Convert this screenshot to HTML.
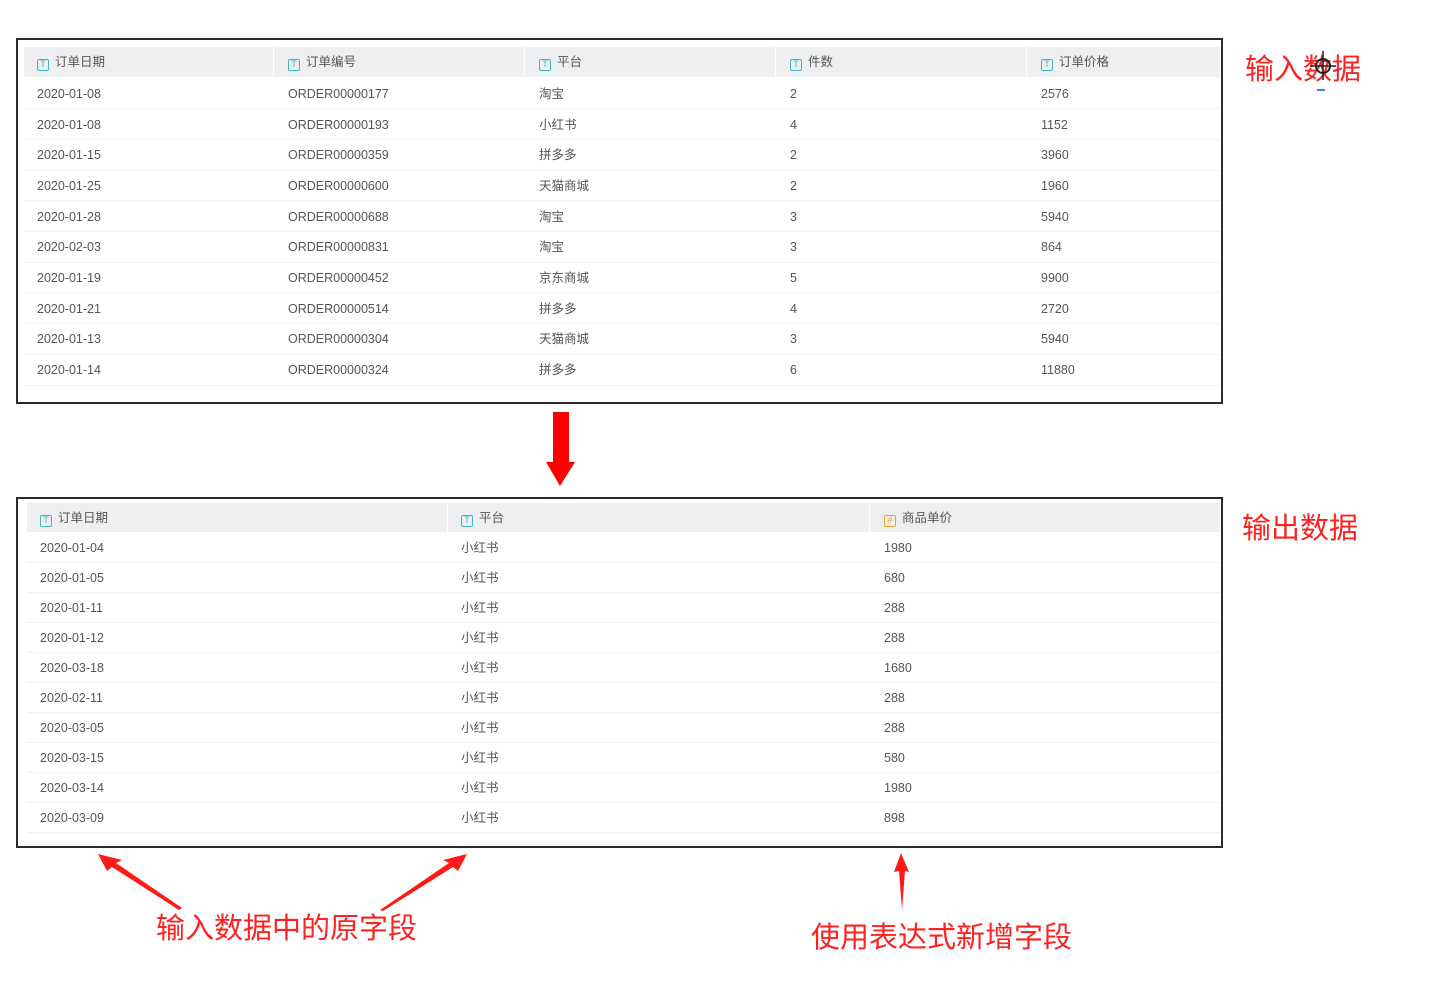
<!DOCTYPE html>
<html><head><meta charset="utf-8">
<style>
body{margin:0;width:1440px;height:983px;background:#fff;position:relative;overflow:hidden;font-family:"Liberation Sans","Noto Sans CJK SC",sans-serif;}
.box{position:absolute;border:2px solid #2b2b2b;box-sizing:border-box;background:#fff}
.hdr{position:absolute;background:#eeeff1}
.t{position:absolute;font-size:12.5px;color:#555;white-space:nowrap;line-height:16px}
.h{color:#555}
.ic{display:inline-block;box-sizing:border-box;width:12px;height:12px;border:1.5px solid #3fb6c2;border-radius:2px;font-size:9px;line-height:9px;text-align:center;color:#3fb6c2;margin-right:6px;vertical-align:-1px;font-weight:normal}
.ic.o{border-color:#f0a030;color:#f0a030}
.line{position:absolute;height:1px;background:#eff0f2}
.lbl{position:absolute;color:#ff2020;font-size:29px;white-space:nowrap;line-height:34px}
</style></head><body>

<div class="box" style="left:16px;top:38px;width:1207px;height:366px"></div>
<div class="hdr" style="left:24px;top:47px;width:1196px;height:30px"></div>
<div style="position:absolute;left:273px;top:47px;width:1px;height:30px;background:#fff"></div>
<div style="position:absolute;left:524px;top:47px;width:1px;height:30px;background:#fff"></div>
<div style="position:absolute;left:775px;top:47px;width:1px;height:30px;background:#fff"></div>
<div style="position:absolute;left:1026px;top:47px;width:1px;height:30px;background:#fff"></div>
<div class="t h" style="left:37px;top:54px"><span class="ic">T</span>订单日期</div>
<div class="t h" style="left:288px;top:54px"><span class="ic">T</span>订单编号</div>
<div class="t h" style="left:539px;top:54px"><span class="ic">T</span>平台</div>
<div class="t h" style="left:790px;top:54px"><span class="ic">T</span>件数</div>
<div class="t h" style="left:1041px;top:54px"><span class="ic">T</span>订单价格</div>

<div class="t" style="left:37px;top:86px">2020-01-08</div><div class="t" style="left:288px;top:86px">ORDER00000177</div><div class="t" style="left:539px;top:86px">淘宝</div><div class="t" style="left:790px;top:86px">2</div><div class="t" style="left:1041px;top:86px">2576</div><div class="line" style="left:24px;top:108px;width:1196px"></div>
<div class="t" style="left:37px;top:117px">2020-01-08</div><div class="t" style="left:288px;top:117px">ORDER00000193</div><div class="t" style="left:539px;top:117px">小红书</div><div class="t" style="left:790px;top:117px">4</div><div class="t" style="left:1041px;top:117px">1152</div><div class="line" style="left:24px;top:139px;width:1196px"></div>
<div class="t" style="left:37px;top:147px">2020-01-15</div><div class="t" style="left:288px;top:147px">ORDER00000359</div><div class="t" style="left:539px;top:147px">拼多多</div><div class="t" style="left:790px;top:147px">2</div><div class="t" style="left:1041px;top:147px">3960</div><div class="line" style="left:24px;top:170px;width:1196px"></div>
<div class="t" style="left:37px;top:178px">2020-01-25</div><div class="t" style="left:288px;top:178px">ORDER00000600</div><div class="t" style="left:539px;top:178px">天猫商城</div><div class="t" style="left:790px;top:178px">2</div><div class="t" style="left:1041px;top:178px">1960</div><div class="line" style="left:24px;top:200px;width:1196px"></div>
<div class="t" style="left:37px;top:209px">2020-01-28</div><div class="t" style="left:288px;top:209px">ORDER00000688</div><div class="t" style="left:539px;top:209px">淘宝</div><div class="t" style="left:790px;top:209px">3</div><div class="t" style="left:1041px;top:209px">5940</div><div class="line" style="left:24px;top:231px;width:1196px"></div>
<div class="t" style="left:37px;top:239px">2020-02-03</div><div class="t" style="left:288px;top:239px">ORDER00000831</div><div class="t" style="left:539px;top:239px">淘宝</div><div class="t" style="left:790px;top:239px">3</div><div class="t" style="left:1041px;top:239px">864</div><div class="line" style="left:24px;top:262px;width:1196px"></div>
<div class="t" style="left:37px;top:270px">2020-01-19</div><div class="t" style="left:288px;top:270px">ORDER00000452</div><div class="t" style="left:539px;top:270px">京东商城</div><div class="t" style="left:790px;top:270px">5</div><div class="t" style="left:1041px;top:270px">9900</div><div class="line" style="left:24px;top:292px;width:1196px"></div>
<div class="t" style="left:37px;top:301px">2020-01-21</div><div class="t" style="left:288px;top:301px">ORDER00000514</div><div class="t" style="left:539px;top:301px">拼多多</div><div class="t" style="left:790px;top:301px">4</div><div class="t" style="left:1041px;top:301px">2720</div><div class="line" style="left:24px;top:323px;width:1196px"></div>
<div class="t" style="left:37px;top:331px">2020-01-13</div><div class="t" style="left:288px;top:331px">ORDER00000304</div><div class="t" style="left:539px;top:331px">天猫商城</div><div class="t" style="left:790px;top:331px">3</div><div class="t" style="left:1041px;top:331px">5940</div><div class="line" style="left:24px;top:354px;width:1196px"></div>
<div class="t" style="left:37px;top:362px">2020-01-14</div><div class="t" style="left:288px;top:362px">ORDER00000324</div><div class="t" style="left:539px;top:362px">拼多多</div><div class="t" style="left:790px;top:362px">6</div><div class="t" style="left:1041px;top:362px">11880</div><div class="line" style="left:24px;top:385px;width:1196px"></div>

<div class="lbl" style="left:1245px;top:53px">输入数据</div>
<svg style="position:absolute;left:1310px;top:48px" width="28" height="48"><circle cx="13" cy="18" r="7" fill="none" stroke="#222" stroke-width="2"/><line x1="13" y1="3" x2="13" y2="32" stroke="#222" stroke-width="1.5"/><line x1="0" y1="18" x2="26" y2="18" stroke="#222" stroke-width="1.5"/><rect x="7" y="41" width="8" height="2" fill="#4a7fd0"/></svg>

<svg style="position:absolute;left:540px;top:410px" width="40" height="80"><rect x="13" y="2" width="16" height="50" fill="#ff0000"/><polygon points="6,52 35,52 20,76" fill="#ff0000"/></svg>

<div class="box" style="left:16px;top:497px;width:1207px;height:351px"></div>
<div class="hdr" style="left:27px;top:503px;width:1193px;height:29px"></div>
<div style="position:absolute;left:447px;top:503px;width:1px;height:29px;background:#fff"></div>
<div style="position:absolute;left:869px;top:503px;width:1px;height:29px;background:#fff"></div>
<div class="t h" style="left:40px;top:510px"><span class="ic">T</span>订单日期</div>
<div class="t h" style="left:461px;top:510px"><span class="ic">T</span>平台</div>
<div class="t h" style="left:884px;top:510px"><span class="ic o">#</span>商品单价</div>

<div class="t" style="left:40px;top:540px">2020-01-04</div><div class="t" style="left:461px;top:540px">小红书</div><div class="t" style="left:884px;top:540px">1980</div><div class="line" style="left:27px;top:562px;width:1193px"></div>
<div class="t" style="left:40px;top:570px">2020-01-05</div><div class="t" style="left:461px;top:570px">小红书</div><div class="t" style="left:884px;top:570px">680</div><div class="line" style="left:27px;top:592px;width:1193px"></div>
<div class="t" style="left:40px;top:600px">2020-01-11</div><div class="t" style="left:461px;top:600px">小红书</div><div class="t" style="left:884px;top:600px">288</div><div class="line" style="left:27px;top:622px;width:1193px"></div>
<div class="t" style="left:40px;top:630px">2020-01-12</div><div class="t" style="left:461px;top:630px">小红书</div><div class="t" style="left:884px;top:630px">288</div><div class="line" style="left:27px;top:652px;width:1193px"></div>
<div class="t" style="left:40px;top:660px">2020-03-18</div><div class="t" style="left:461px;top:660px">小红书</div><div class="t" style="left:884px;top:660px">1680</div><div class="line" style="left:27px;top:682px;width:1193px"></div>
<div class="t" style="left:40px;top:690px">2020-02-11</div><div class="t" style="left:461px;top:690px">小红书</div><div class="t" style="left:884px;top:690px">288</div><div class="line" style="left:27px;top:712px;width:1193px"></div>
<div class="t" style="left:40px;top:720px">2020-03-05</div><div class="t" style="left:461px;top:720px">小红书</div><div class="t" style="left:884px;top:720px">288</div><div class="line" style="left:27px;top:742px;width:1193px"></div>
<div class="t" style="left:40px;top:750px">2020-03-15</div><div class="t" style="left:461px;top:750px">小红书</div><div class="t" style="left:884px;top:750px">580</div><div class="line" style="left:27px;top:772px;width:1193px"></div>
<div class="t" style="left:40px;top:780px">2020-03-14</div><div class="t" style="left:461px;top:780px">小红书</div><div class="t" style="left:884px;top:780px">1980</div><div class="line" style="left:27px;top:802px;width:1193px"></div>
<div class="t" style="left:40px;top:810px">2020-03-09</div><div class="t" style="left:461px;top:810px">小红书</div><div class="t" style="left:884px;top:810px">898</div><div class="line" style="left:27px;top:832px;width:1193px"></div>

<div class="lbl" style="left:1242px;top:512px">输出数据</div>

<svg style="position:absolute;left:0;top:850px" width="1440" height="70">
<polygon points="98,4 122,10 116,13 182,58 179,60 112,17 107,21" fill="#ff1a1a"/>
<polygon points="467,4 443,10 449,13 380,60 383,61 453,17 458,21" fill="#ff1a1a"/>
<polygon points="901,3 894,22 899,21 902,60 905,21 909,22" fill="#ff1a1a"/>
</svg>
<div class="lbl" style="left:156px;top:912px">输入数据中的原字段</div>
<div class="lbl" style="left:811px;top:921px">使用表达式新增字段</div>
</body></html>
